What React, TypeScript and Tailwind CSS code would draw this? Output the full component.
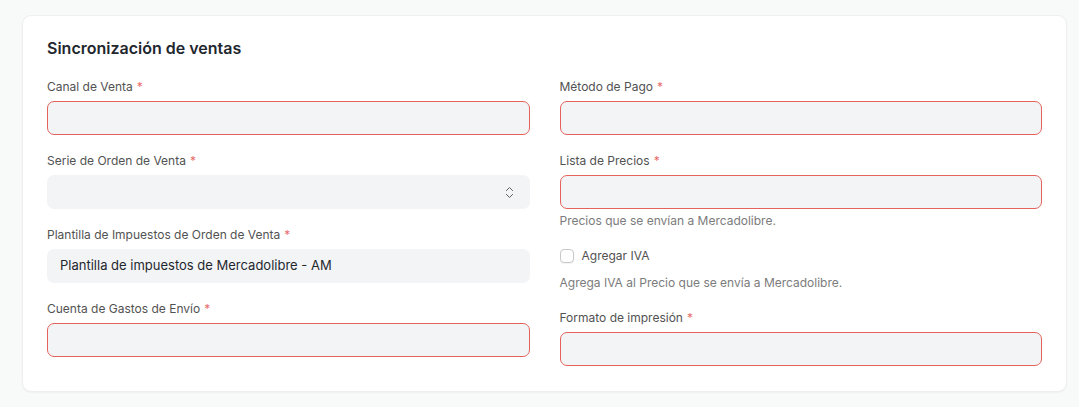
import { ChevronsUpDown } from 'lucide-react'

type FieldProps = {
    label: string
    required?: boolean
    invalid?: boolean
    value?: string
    select?: boolean
    description?: string
}

function Field({ label, required, invalid, value, select, description }: FieldProps) {
    return (
        <div className="flex flex-col">
            <label className="text-[12px] leading-4 text-[#525252]">
                {label}
                {required && <span className="ml-1 text-[#e86c6c]">*</span>}
            </label>
            <div
                className={`mt-[6px] flex h-[34px] items-center justify-between rounded-[7px] bg-[#f3f4f6] px-3 ${
                    invalid ? 'border border-[#e4625b]' : 'border border-transparent'
                }`}
            >
                <span className="text-[13px] text-[#1f272e]">{value}</span>
                {select && <ChevronsUpDown className="size-[15px] text-[#555]" strokeWidth={1.5} />}
            </div>
            {description && (
                <p className="mt-1 text-[12px] leading-4 text-[#7c7c7c]">{description}</p>
            )}
        </div>
    )
}

export default function App() {
    return (
        <div className="min-h-[407px] bg-[#f8f9f9] pt-[15px] pl-[22px] font-['Inter',sans-serif]">
            <div className="w-[1045px] rounded-[9px] border border-[#efefef] bg-white px-[24px] pt-[20px] pb-[25px] shadow-[0_1px_2px_rgba(0,0,0,0.04)]">
                <h2 className="text-[16px] leading-6 font-semibold text-[#1f272e]">Sincronización de ventas</h2>

                <div className="mt-[19px] grid grid-cols-2 gap-x-[30px]">
                    <div className="flex flex-col gap-[18px]">
                        <Field label="Canal de Venta" required invalid />
                        <Field label="Serie de Orden de Venta" required select />
                        <Field
                            label="Plantilla de Impuestos de Orden de Venta"
                            required
                            value="Plantilla de impuestos de Mercadolibre - AM"
                        />
                        <Field label="Cuenta de Gastos de Envío" required invalid />
                    </div>

                    <div className="flex flex-col">
                        <Field label="Método de Pago" required invalid />
                        <div className="mt-[18px]">
                            <Field
                                label="Lista de Precios"
                                required
                                invalid
                                description="Precios que se envían a Mercadolibre."
                            />
                        </div>
                        <div className="mt-[19px] flex items-center gap-2 leading-4">
                            <span className="size-[14px] rounded-[4px] border border-[#c8c8c8] bg-white shadow-[0_1px_1px_rgba(0,0,0,0.05)]"></span>
                            <span className="text-[12px] text-[#525252]">Agregar IVA</span>
                        </div>
                        <p className="mt-[11px] text-[12px] leading-4 text-[#7c7c7c]">
                            Agrega IVA al Precio que se envía a Mercadolibre.
                        </p>
                        <div className="mt-[19px]">
                            <Field label="Formato de impresión" required invalid />
                        </div>
                    </div>
                </div>
            </div>
        </div>
    )
}
